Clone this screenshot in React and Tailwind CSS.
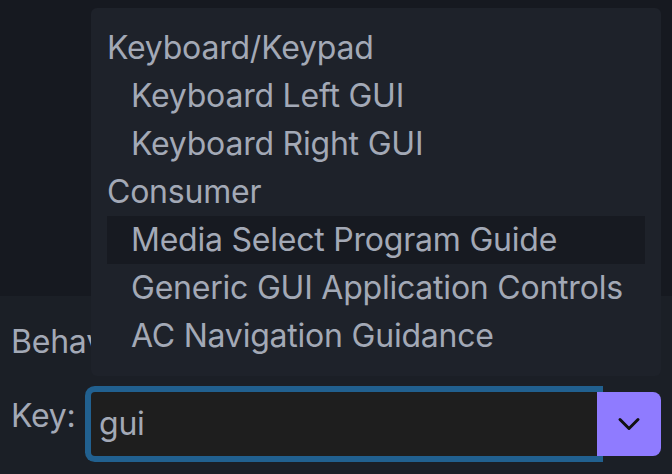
import React from "react";
import { ChevronDown } from "lucide-react";

const OPTIONS = [
  { label: "Keyboard/Keypad", group: true },
  { label: "Keyboard Left GUI" },
  { label: "Keyboard Right GUI" },
  { label: "Consumer", group: true },
  { label: "Media Select Program Guide", active: true },
  { label: "Generic GUI Application Controls" },
  { label: "AC Navigation Guidance" },
];

const App = () => {
  return (
    <div className="relative h-[474px] w-[672px] overflow-hidden bg-[#1b1f26] font-['Inter',sans-serif] text-[32px] leading-[48px] tracking-[-0.22px] text-[#a3a9b6]">
      <div className="h-[296px] bg-[#161920]" />

      <div className="px-[11px] pt-[22px]">
        <p>Behavior:</p>
        <div className="mt-[26px] flex items-start gap-[16px]">
          <span className="w-[64px]">Key:</span>
          <div className="flex h-[64px] w-[570px]">
            <div className="flex flex-1 items-center rounded-l-[4px] bg-[#1e1e1e] pl-[8px] text-[#a3a9b6] ring-[6px] ring-[#21608f]">
              gui
            </div>
            <button type="button" className="relative flex w-[64px] items-center justify-center rounded-r-[8px] bg-[#8f7bff] text-[#111]">
              <ChevronDown size={36} strokeWidth={2} />
            </button>
          </div>
        </div>
      </div>

      {/* dropdown list */}
      <div className="absolute left-[91px] top-[8px] w-[570px] rounded-[6px] bg-[#1e222a] p-[16px]">
        {OPTIONS.map((opt) => (
          <div
            key={opt.label}
            className={`h-[48px] whitespace-nowrap ${opt.group ? "" : "pl-[24px]"} ${opt.active ? "bg-[#171a21]" : ""}`}
          >
            {opt.label}
          </div>
        ))}
      </div>
    </div>
  );
};

export default App;
